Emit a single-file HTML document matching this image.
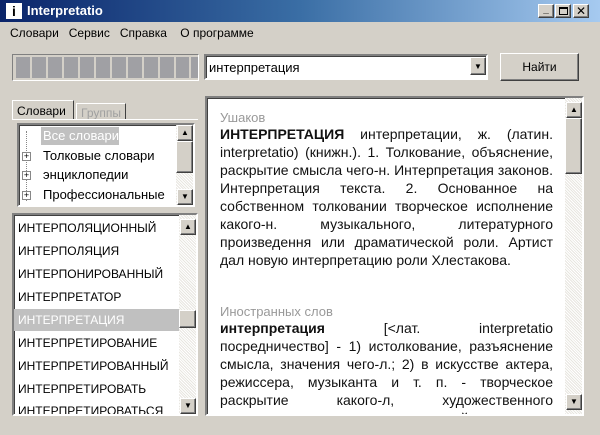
<!DOCTYPE html>
<html><head><meta charset="utf-8"><style>
*{box-sizing:border-box;margin:0;padding:0}
body{width:600px;height:435px;background:#d4d0c8;font-family:"Liberation Sans","DejaVu Sans",sans-serif;position:relative;overflow:hidden;font-size:12px;color:#000}
.a{position:absolute;white-space:nowrap}
.title{left:0;top:0;width:600px;height:22px;background:linear-gradient(90deg,#0a246a 0%,#3a6ea5 50%,#a6caf0 100%);}
.sunk{border:2px solid;border-color:#808080 #fff #fff #808080;box-shadow:inset 1px 1px 0 #404040}
.raised{background:#d4d0c8;border:1px solid;border-color:#fff #404040 #404040 #fff;box-shadow:inset -1px -1px 0 #808080}
.sb{background:repeating-linear-gradient(45deg,#e8e6e0 0 1px,#fff 1px 2px)}
.arr{width:16px;height:16px}
.li{position:absolute;left:4px;font-size:12px;white-space:nowrap}
.txt{font-size:14px;line-height:18px;text-align:justify;color:#111;white-space:normal}
</style></head><body>
<div class="a title"></div>
<div class="a" style="left:6px;top:3px;width:16px;height:16px;background:#fff;color:#000;font-weight:bold;font-size:14px;text-align:center;line-height:16px">i</div>
<div class="a" style="left:27px;top:3px;color:#fff;font-weight:bold;font-size:13px">Interpretatio</div>
<div class="a raised" style="left:538px;top:4px;width:16px;height:14px;font-size:10px;line-height:10px;text-align:center;font-weight:bold">_</div>
<div class="a raised" style="left:555px;top:4px;width:16px;height:14px"><div class="a" style="left:3px;top:2px;width:9px;height:8px;border:1px solid #000;border-top-width:2px"></div></div>
<div class="a raised" style="left:573px;top:4px;width:16px;height:14px;font-size:12px;line-height:12px;text-align:center;font-weight:bold">✕</div>
<div class="a" style="left:10px;top:26px;font-size:12px">Словари&nbsp;&nbsp; Сервис&nbsp;&nbsp; Справка&nbsp;&nbsp;&nbsp; О программе</div>

<div class="a" style="left:12px;top:54px;width:187px;height:27px;border:1px solid;border-color:#808080 #fff #fff #808080;background:#d4d0c8;padding:2px 0 0 3px;display:flex;gap:2px">
<div style="width:15px;height:21px;background:#a0a0a4"></div><div style="width:15px;height:21px;background:#a0a0a4"></div><div style="width:15px;height:21px;background:#a0a0a4"></div><div style="width:15px;height:21px;background:#a0a0a4"></div><div style="width:15px;height:21px;background:#a0a0a4"></div><div style="width:15px;height:21px;background:#a0a0a4"></div><div style="width:15px;height:21px;background:#a0a0a4"></div><div style="width:15px;height:21px;background:#a0a0a4"></div><div style="width:15px;height:21px;background:#a0a0a4"></div><div style="width:15px;height:21px;background:#a0a0a4"></div><div style="width:15px;height:21px;background:#a0a0a4"></div><div style="width:7px;height:21px;background:#a0a0a4"></div></div>
<div class="a sunk" style="left:204px;top:54px;width:284px;height:26px;background:#fff"><div class="a" style="left:3px;top:4px;font-size:13px">интерпретация</div>
<div class="a raised arr" style="right:0;top:1px;width:16px;height:18px;font-size:8px;text-align:center;line-height:17px">▼</div></div>
<div class="a raised" style="left:500px;top:53px;width:79px;height:28px;text-align:center;line-height:26px;font-size:12px">Найти</div>

<div class="a" style="left:12px;top:100px;width:62px;height:20px;border:1px solid;border-color:#fff #404040 transparent #fff;border-bottom:none;background:#d4d0c8;padding:3px 0 0 4px;font-size:12px">Словари</div>
<div class="a" style="left:76px;top:103px;width:50px;height:17px;border:1px solid;border-color:#fff #404040 transparent #fff;color:#a0a0a0;padding:2px 0 0 4px;font-size:12px">Группы</div>
<div class="a" style="left:12px;top:119px;width:186px;height:91px;border-top:1px solid #fff"></div>
<div class="a sunk" style="left:17px;top:123px;width:178px;height:84px;background:#fff">
<div class="a" style="left:22px;top:2px;width:78px;height:18px;background:#c0c0c0;color:#fff;font-size:13px;padding:1px 0 0 2px">Все словари</div>
<div class="a" style="left:7px;top:6px;height:70px;border-left:1px dotted #888"></div>
<div class="a" style="left:3px;top:27px;width:9px;height:9px;border:1px solid #888;background:#fff;font-size:9px;line-height:7px;text-align:center">+</div>
<div class="a" style="left:3px;top:46px;width:9px;height:9px;border:1px solid #888;background:#fff;font-size:9px;line-height:7px;text-align:center">+</div>
<div class="a" style="left:3px;top:66px;width:9px;height:9px;border:1px solid #888;background:#fff;font-size:9px;line-height:7px;text-align:center">+</div>
<div class="a" style="left:24px;top:23px;font-size:13px">Толковые словари</div>
<div class="a" style="left:24px;top:42px;font-size:13px">энциклопедии</div>
<div class="a" style="left:24px;top:62px;font-size:13px">Профессиональные</div>
<div class="a sb" style="right:0;top:0;width:17px;height:80px"></div>
<div class="a raised arr" style="right:0;top:0;font-size:8px;text-align:center;line-height:14px">▲</div>
<div class="a raised" style="right:0;top:16px;width:17px;height:32px"></div>
<div class="a raised arr" style="right:0;bottom:0;font-size:8px;text-align:center;line-height:14px">▼</div>
</div>

<div class="a sunk" style="left:12px;top:213px;width:186px;height:203px;background:#fff;overflow:hidden">
<div class="li" style="top:6px">ИНТЕРПОЛЯЦИОННЫЙ</div>
<div class="li" style="top:29px">ИНТЕРПОЛЯЦИЯ</div>
<div class="li" style="top:52px">ИНТЕРПОНИРОВАННЫЙ</div>
<div class="li" style="top:75px">ИНТЕРПРЕТАТОР</div>
<div class="a" style="left:0;top:94px;width:166px;height:22px;background:#c0c0c0"></div>
<div class="li" style="top:98px;color:#fff">ИНТЕРПРЕТАЦИЯ</div>
<div class="li" style="top:121px">ИНТЕРПРЕТИРОВАНИЕ</div>
<div class="li" style="top:144px">ИНТЕРПРЕТИРОВАННЫЙ</div>
<div class="li" style="top:167px">ИНТЕРПРЕТИРОВАТЬ</div>
<div class="li" style="top:189px">ИНТЕРПРЕТИРОВАТЬСЯ</div>
<div class="a sb" style="right:0;top:0;width:17px;height:200px"></div>
<div class="a raised arr" style="right:0;top:4px;font-size:8px;text-align:center;line-height:14px">▲</div>
<div class="a raised" style="right:0;top:95px;width:17px;height:18px"></div>
<div class="a raised arr" style="right:0;bottom:0;font-size:8px;text-align:center;line-height:14px">▼</div>
</div>

<div class="a sunk" style="left:205px;top:96px;width:379px;height:320px;background:#fff;overflow:hidden">
<div class="a" style="left:13px;top:12px;width:333px;white-space:normal">
<div style="color:#999;font-size:13px;line-height:15px">Ушаков</div>
<div class="txt"><b>ИНТЕРПРЕТАЦИЯ</b> интерпретации, ж. (латин. interpretatio) (книжн.). 1. Толкование, объяснение, раскрытие смысла чего-н. Интерпретация законов. Интерпретация текста. 2. Основанное на собственном толковании творческое исполнение какого-н. музыкального, литературного произведення или драматической роли. Артист дал новую интерпретацию роли Хлестакова.</div>
<div style="color:#999;font-size:13px;line-height:15px;margin-top:35px">Иностранных слов</div>
<div class="txt"><b>интерпретация</b> [&lt;лат. interpretatio посредничество] - 1) истолкование, разъяснение смысла, значения чего-л.; 2) в искусстве актера, режиссера, музыканта и т. п. - творческое раскрытие какого-л, художественного произведения, определяющееся идейно</div>
</div>
<div class="a sb" style="right:0;top:0;width:17px;height:316px"></div>
<div class="a raised arr" style="right:0;top:4px;font-size:8px;text-align:center;line-height:14px">▲</div>
<div class="a raised" style="right:0;top:20px;width:17px;height:56px"></div>
<div class="a raised arr" style="right:0;bottom:4px;font-size:8px;text-align:center;line-height:14px">▼</div>
</div>
</body></html>
